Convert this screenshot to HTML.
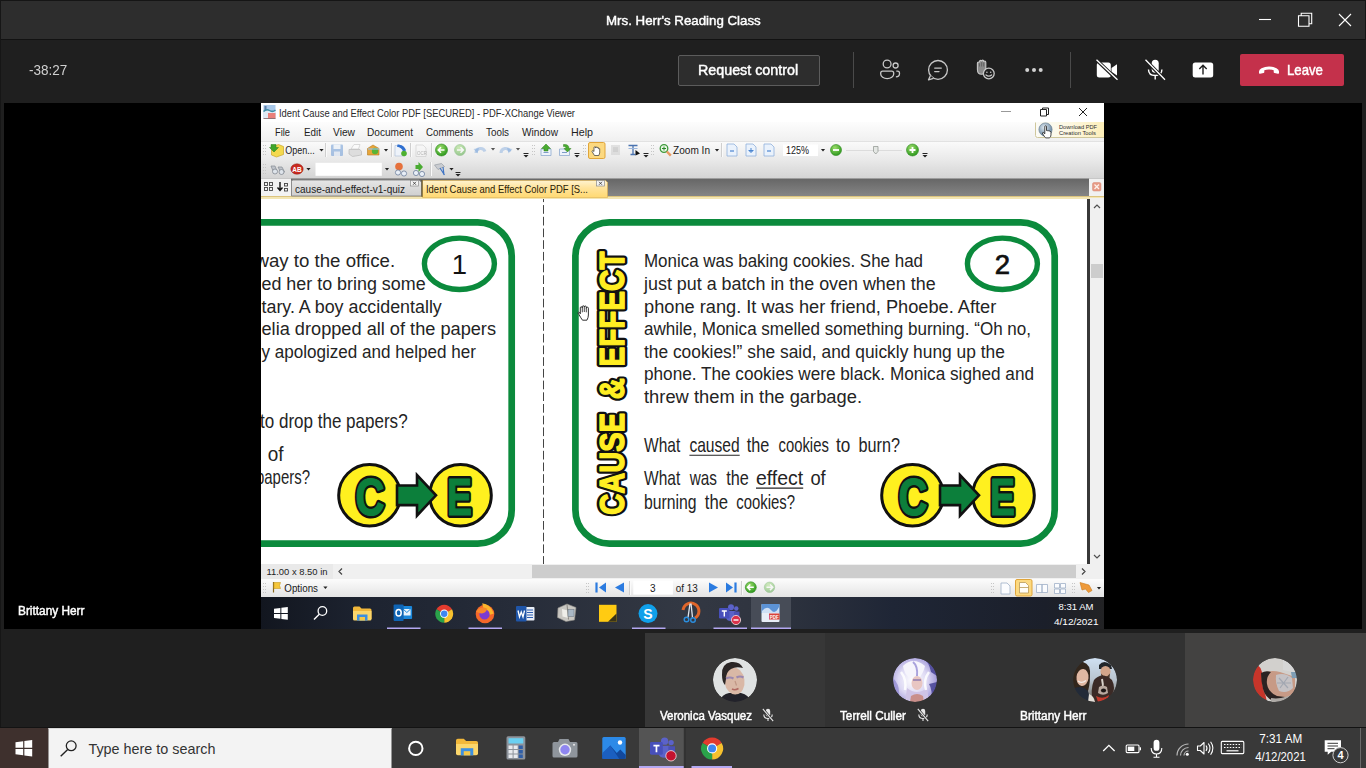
<!DOCTYPE html>
<html lang="en">
<head>
<meta charset="utf-8">
<title>Mrs. Herr's Reading Class</title>
<style>
*{box-sizing:border-box;margin:0;padding:0}
html,body{width:1366px;height:768px;overflow:hidden;background:#1f1f1f;font-family:"Liberation Sans",sans-serif;}
.abs{position:absolute}
.fit{display:inline-block;white-space:nowrap;transform-origin:0 50%;font-weight:normal;-webkit-text-stroke:0.45px currentColor}
#f2{-webkit-text-stroke:0}
#f3{position:absolute;left:19px;top:.5px}
#titlebar{position:absolute;left:0;top:0;width:1366px;height:39px;background:#2d2d2d;}
#titlebar .ttl{position:absolute;left:605.6px;top:11.5px;color:#fff;font-size:13.5px;line-height:18px;font-weight:bold;white-space:nowrap}
#tline{position:absolute;left:0;top:38.500px;width:1366px;height:1.500px;background:#121212}
#toolbar{position:absolute;left:0;top:40px;width:1366px;height:63px;background:#1f1f1f}
#timer{position:absolute;left:29.4px;top:20.7px;color:#d0d0d0;font-size:15px;line-height:18px}
#reqbtn{position:absolute;left:678px;top:14.5px;width:142px;height:31px;border:1px solid #5c5c5c;background:#2d2d2d;color:#fff;font-weight:bold;font-size:14px;line-height:29px;border-radius:2px}
.vsep{position:absolute;width:1px;background:#4a4a4a;top:12px;height:36px}
#leave{position:absolute;left:1240px;top:14px;width:104px;height:32px;background:#c4314b;border-radius:2px;color:#fff;font-weight:bold;font-size:14.5px;line-height:32.5px}
#leave span{position:absolute;left:47px;top:0}
#stage{position:absolute;left:4px;top:103px;width:1358px;height:526px;background:#000}
#presenter{position:absolute;left:18px;top:603px;color:#fff;font-size:12px;font-weight:bold;line-height:16px}
#strip{position:absolute;left:645px;top:633px;width:721px;height:94px}
.tile{position:absolute;top:0;height:94px;background:#323232}
.tile .nm{position:absolute;left:15px;top:75px;color:#fff;font-size:12px;font-weight:bold;line-height:16px;white-space:nowrap}
.av{position:absolute;top:25px;width:44px;height:44px;border-radius:50%;overflow:hidden}
#wtask{position:absolute;left:0;top:728px;width:1366px;height:40px;background:#1c1c1c}
#search{position:absolute;left:49px;top:0;width:342px;height:40px;background:#f2f2f2;color:#2b2b2b;font-size:15px;line-height:40px}
#search span{position:absolute;left:39px;top:0}
#pdf{position:absolute;left:261px;top:103px;width:843px;height:526px;background:#f0f0f0;overflow:hidden}
</style>
</head>
<body>
<div id="titlebar">
  <div class="ttl"><span class="fit" id="f1" style="transform:scaleX(0.985)">Mrs. Herr's Reading Class</span></div>
  <svg class="abs" style="left:1250px;top:0" width="116" height="39" viewBox="0 0 116 39" fill="none" stroke="#fff" stroke-width="1.100">
    <path d="M9 19.500H21"/>
    <path d="M48.500 15.700h10.500v10.500h-10.500zM51.200 15.700v-2.500h10.500v10.500h-2.700"/>
    <path d="M89 14l12 12M101 14l-12 12"/>
  </svg>
</div>
<div id="tline"></div><div class="abs" style="left:0;top:0;width:1366px;height:1px;background:#151515"></div><div class="abs" style="left:1365px;top:0;width:1px;height:103px;background:#161616"></div>
<div id="toolbar">
  <div id="timer"><span class="fit" id="f2" style="transform:scaleX(0.900)">-38:27</span></div>
  <div id="reqbtn"><span class="fit" id="f3" style="transform:scaleX(1.021)">Request control</span></div>
  <div class="vsep" style="left:853px"></div>
  <div class="vsep" style="left:1070px"></div>
  <svg class="abs" style="left:860px;top:5px" width="380" height="50" viewBox="860 45 380 50" fill="none" stroke="#c8c8c8" stroke-width="1.300">
<circle cx="887.100" cy="64" r="3.900"/><circle cx="895.600" cy="65.500" r="2.500"/>
<path d="M882.700 71.200h9q2 0 2 2v.8a6.500 4.600 0 0 1-13 0v-.8q0-2 2-2z"/>
<path d="M896.300 71.200h1.200q2 0 2 2v.3q0 3.200-3.600 3.300"/>
<circle cx="938" cy="69.900" r="9.400"/><path d="M930.500 75.500l-2 4.300 5-1.500" fill="#1f1f1f" stroke-linejoin="round"/>
<path d="M934.700 68.100h6.600M934.700 71.600h4.300" stroke-linecap="round"/>
<path d="M977.400 63.300q0-1.300 1.050-1.300t1.050 1.300v-1.600q0-1.300 1.050-1.300t1.050 1.300v-.3q0-1.300 1.050-1.300t1.050 1.300v.9q0-1.300 1.050-1.300t1.050 1.300v7.200q0 4.800-4.200 4.800t-4.200-4.800z" fill="#8a8a8a" stroke-linejoin="round" stroke-width="1.100"/>
<path d="M979.500 62.500v4M981.600 61.500v5M983.700 62v4.500" stroke="#555" stroke-width=".7"/>
<circle cx="988.800" cy="73.500" r="5.400" fill="#1f1f1f"/><path d="M986 75q2.800 2.200 5.600 0" stroke-linecap="round"/><circle cx="986.900" cy="72.200" r=".8" fill="#c8c8c8" stroke="none"/><circle cx="990.700" cy="72.200" r=".8" fill="#c8c8c8" stroke="none"/>
<g fill="#d0d0d0" stroke="none"><circle cx="1027.200" cy="69.900" r="2"/><circle cx="1034" cy="69.900" r="2"/><circle cx="1040.700" cy="69.900" r="2"/></g>
<g fill="#fff" stroke="none"><rect x="1096.800" y="62.400" width="14" height="15" rx="2.500"/><path d="M1111.500 68l5.500-3.800v11.400l-5.500-3.800z"/>
<rect x="1151.700" y="59.800" width="7" height="13" rx="3.500"/>
<path d="M1192.700 64.900q0-2.500 2.500-2.500h15.500q2.500 0 2.500 2.500v10q0 2.500-2.500 2.500h-15.500q-2.500 0-2.500-2.500z"/></g>
<path d="M1148.500 69.500q0 6 6.700 6t6.700-6M1155.200 75.500v4" stroke="#fff" stroke-width="1.400"/>
<path d="M1096 59.500l21.500 20.500M1145 59.500l20 20.500" stroke="#1f1f1f" stroke-width="3.400"/>
<path d="M1096.500 59.800l21 20M1145.500 59.800l19.500 20" stroke="#fff" stroke-width="1.300"/>
<path d="M1203 74.500v-9M1199.300 69l3.700-3.700 3.700 3.700" stroke="#1f1f1f" stroke-width="1.400"/>
</svg>
  <div id="leave"><svg class="abs" style="left:17px;top:9px" width="24" height="14" viewBox="0 0 24 14"><path d="M2 8.500q0-2 2.500-3.300q3.500-1.700 7.500-1.700t7.500 1.700q2.500 1.300 2.500 3.300v1.500q0 1-1 .8l-3.500-.8q-.8-.2-.8-1v-1.800q-2-.8-4.700-.8t-4.700.8v1.800q0 .8-.8 1l-3.500.8q-1 .2-1-.8z" fill="#fff"/></svg><span class="fit" id="f4" style="transform:scaleX(0.909)">Leave</span></div>
</div>
<div id="stage"></div><div class="abs" style="left:0;top:0;width:1px;height:728px;background:#161616"></div>
<div id="presenter"><span class="fit" id="f5" style="transform:scaleX(0.987)">Brittany Herr</span></div>
<div id="pdf">
<svg id="pdfsvg" class="abs" style="left:0;top:0" width="843" height="526" viewBox="261 103 843 526" font-family="'Liberation Sans',sans-serif">
<defs>
<linearGradient id="gTb" x1="0" y1="0" x2="0" y2="1"><stop offset="0" stop-color="#fbfbfb"/><stop offset="0.5" stop-color="#e9e9e9"/><stop offset="1" stop-color="#d3d3d3"/></linearGradient>
<linearGradient id="gMenu" x1="0" y1="0" x2="0" y2="1"><stop offset="0" stop-color="#fdfdfd"/><stop offset="1" stop-color="#f0f0f0"/></linearGradient>
<linearGradient id="gTabbar" x1="0" y1="0" x2="0" y2="1"><stop offset="0" stop-color="#666"/><stop offset="1" stop-color="#858585"/></linearGradient>
<linearGradient id="gTabA" x1="0" y1="0" x2="0" y2="1"><stop offset="0" stop-color="#fff3cf"/><stop offset="0.45" stop-color="#ffe39a"/><stop offset="1" stop-color="#ffd972"/></linearGradient>
<linearGradient id="gTabI" x1="0" y1="0" x2="0" y2="1"><stop offset="0" stop-color="#e6e6e6"/><stop offset="1" stop-color="#cfcfcf"/></linearGradient>
<linearGradient id="gStat" x1="0" y1="0" x2="0" y2="1"><stop offset="0" stop-color="#fcfcfc"/><stop offset="1" stop-color="#e4e4e4"/></linearGradient>
<linearGradient id="gWt" x1="0" y1="0" x2="1" y2="0"><stop offset="0" stop-color="#12161f"/><stop offset="0.12" stop-color="#1d2330"/><stop offset="0.3" stop-color="#262c39"/><stop offset="0.5" stop-color="#333843"/><stop offset="0.6" stop-color="#2f343f"/><stop offset="0.75" stop-color="#1f2636"/><stop offset="0.93" stop-color="#1b1f2a"/><stop offset="1" stop-color="#222224"/></linearGradient>
<radialGradient id="gGreen" cx="0.4" cy="0.3" r="0.7"><stop offset="0" stop-color="#9bdc6a"/><stop offset="1" stop-color="#2f9a1f"/></radialGradient>
<linearGradient id="gDl" x1="0" y1="0" x2="1" y2="0"><stop offset="0" stop-color="#fbfbf7"/><stop offset="0.5" stop-color="#fdf8e2"/><stop offset="1" stop-color="#fdeeb8"/></linearGradient><radialGradient id="gGlobe" cx="0.4" cy="0.35" r="0.7"><stop offset="0" stop-color="#dfe8ef"/><stop offset="1" stop-color="#5f7f9b"/></radialGradient><clipPath id="docclip"><rect x="261" y="199" width="826" height="365"/></clipPath>
</defs>
<!-- title bar -->
<rect x="261" y="103" width="843" height="19" fill="#ffffff"/>
<g id="picon"><rect x="263.500" y="105" width="12" height="13.500" fill="#a9c9ea"/><rect x="264.500" y="106" width="2" height="4" fill="#5f7fa8"/><path d="M263.500 112q3-3 6-1t6-1v8.500h-12z" fill="#dfeaf5"/><path d="M263.500 111.500q3-3 6-1t6-.500" stroke="#3f8fa5" stroke-width="1.500" fill="none"/><rect x="268" y="113" width="7.500" height="5.500" fill="#e9807a"/><path d="M263.500 118.500h12" stroke="#7d5f62" stroke-width=".8"/></g>
<text x="279" y="116.600" font-size="10.400" fill="#2a2a2a" textLength="296" lengthAdjust="spacingAndGlyphs">Ident Cause and Effect Color PDF [SECURED] - PDF-XChange Viewer</text>
<g stroke="#444" stroke-width="1" fill="none"><path d="M1001 111.500h10" stroke="#999"/><path d="M1040.500 109.500h6v6.500h-6zM1042.500 109.500v-1.500h6v6.500h-2" stroke="#222" stroke-linejoin="round"/><path d="M1079 108l8 8M1087 108l-8 8" stroke="#222"/></g>
<!-- menu bar -->
<rect x="261" y="122" width="843" height="19" fill="url(#gMenu)"/>
<g font-size="10.400" fill="#1e1e1e">
<text x="275" y="135.500" textLength="15" lengthAdjust="spacingAndGlyphs">File</text>
<text x="304" y="135.500" textLength="17" lengthAdjust="spacingAndGlyphs">Edit</text>
<text x="333" y="135.500" textLength="22" lengthAdjust="spacingAndGlyphs">View</text>
<text x="367" y="135.500" textLength="46" lengthAdjust="spacingAndGlyphs">Document</text>
<text x="426" y="135.500" textLength="47" lengthAdjust="spacingAndGlyphs">Comments</text>
<text x="486" y="135.500" textLength="23" lengthAdjust="spacingAndGlyphs">Tools</text>
<text x="522" y="135.500" textLength="36" lengthAdjust="spacingAndGlyphs">Window</text>
<text x="571" y="135.500" textLength="22" lengthAdjust="spacingAndGlyphs">Help</text>
</g>
<!-- download box -->
<rect x="1035" y="122" width="69" height="15.500" fill="url(#gDl)"/>
<path d="M1035.500 122.500v13q0 2 2 2h66.500" fill="none" stroke="#cfc79c" stroke-width="1"/>
<circle cx="1045.500" cy="129.500" r="6.600" fill="url(#gGlobe)" stroke="#6f8294" stroke-width=".7"/>
<path d="M1044.800 126.300q.850-.900 1.700 0v4.200l1.100.200q.700-.500 1.200.300q.800-.300 1.200.400q1-.100 1 .900v2.500q0 2.300-1.700 3.100h-3.500q-1.200-.600-2.500-3.100l-1-1.800q.600-.900 1.600-.200l.900 1z" fill="#fff" stroke="#1a1a1a" stroke-width=".8" stroke-linejoin="round"/>
<g font-size="6.200" fill="#2e2e2e"><text x="1059" y="128.900" textLength="38" lengthAdjust="spacingAndGlyphs">Download PDF</text><text x="1059" y="135" textLength="37" lengthAdjust="spacingAndGlyphs">Creation Tools</text></g>
<!-- toolbars -->
<rect x="261" y="141" width="843" height="38" fill="url(#gTb)"/>
<rect x="261" y="141" width="843" height="1" fill="#e2e2e2"/>
<!--TB-START--><rect x="263" y="145" width="1" height="1" fill="#c6c6c6"/><rect x="265" y="145" width="1" height="1" fill="#c6c6c6"/><rect x="263" y="148" width="1" height="1" fill="#c6c6c6"/><rect x="265" y="148" width="1" height="1" fill="#c6c6c6"/><rect x="263" y="151" width="1" height="1" fill="#c6c6c6"/><rect x="265" y="151" width="1" height="1" fill="#c6c6c6"/><rect x="263" y="154" width="1" height="1" fill="#c6c6c6"/><rect x="265" y="154" width="1" height="1" fill="#c6c6c6"/><rect x="263" y="164" width="1" height="1" fill="#c6c6c6"/><rect x="265" y="164" width="1" height="1" fill="#c6c6c6"/><rect x="263" y="167" width="1" height="1" fill="#c6c6c6"/><rect x="265" y="167" width="1" height="1" fill="#c6c6c6"/><rect x="263" y="170" width="1" height="1" fill="#c6c6c6"/><rect x="265" y="170" width="1" height="1" fill="#c6c6c6"/><rect x="263" y="173" width="1" height="1" fill="#c6c6c6"/><rect x="265" y="173" width="1" height="1" fill="#c6c6c6"/><path d="M271.500 147l7-2.500 5 2v8l-7 2.500-5-2z" fill="#f4d94e" stroke="#c9a62a" stroke-width=".7"/><path d="M271 144.500h5v3h2.500l-4.500 4.500-4.500-4.500h1.500z" fill="#3ea52a" stroke="#2a7d1b" stroke-width=".5"/><text x="285.200" y="154" font-size="10.500" fill="#1a1a1a" textLength="29.500" lengthAdjust="spacingAndGlyphs">Open...</text><path d="M319.4 149h4.200l-2.100 2.400z" fill="#222"/><rect x="325" y="143" width="1" height="14" fill="#cfcfcf"/><rect x="326" y="143" width="1" height="14" fill="#fafafa"/><g opacity=".55"><rect x="331" y="144.500" width="12" height="11.500" rx="1" fill="#6d9bd6"/><rect x="333.500" y="144.500" width="7" height="4.500" fill="#e8f0fa"/><rect x="334" y="151.500" width="6" height="4.500" fill="#d6e2f3"/></g><g opacity=".8"><path d="M351 149l3-4.500h6l-1.500 4.500z" fill="#fdfdfd" stroke="#b9b9b9" stroke-width=".6"/><path d="M349 149.500h11l1.500 2v3.500l-9 1.500-3.500-2.500z" fill="#d9d9d9" stroke="#a5a5a5" stroke-width=".6"/></g><path d="M367.500 148.500l5.500-3.500 6 3.500v6.500h-11.500z" fill="#e7a53a" stroke="#b67a1c" stroke-width=".6"/><circle cx="375" cy="151" r="3.200" fill="#58b436"/><path d="M368 149h11" stroke="#9cc0e4" stroke-width="1.200"/><path d="M383.9 149h4.200l-2.100 2.400z" fill="#222"/><rect x="391" y="143" width="1" height="14" fill="#cfcfcf"/><rect x="392" y="143" width="1" height="14" fill="#fafafa"/><path d="M395 145.500h6l4 4v6.500h-10z" fill="#eef3fa" stroke="#a9bcd6" stroke-width=".6"/><path d="M397.500 144.500c4 0 7.500 2 8.500 6l-3 1c-1-3-3-4.500-6-4.800z" fill="#2f6fd0"/><circle cx="404" cy="153.500" r="2.800" fill="#4db030"/><rect x="410" y="143" width="1" height="14" fill="#cfcfcf"/><rect x="411" y="143" width="1" height="14" fill="#fafafa"/><g opacity=".5"><path d="M416 145h7l3 3v8.500h-10z" fill="#f7f7f7" stroke="#b0b0b0" stroke-width=".7"/><text x="417" y="154.500" font-size="4.500" fill="#777">OCR</text></g><rect x="431" y="143" width="1" height="14" fill="#cfcfcf"/><rect x="432" y="143" width="1" height="14" fill="#fafafa"/><g opacity="1"><circle cx="441.5" cy="150" r="6" fill="url(#gGreen)" stroke="#2c8a1c" stroke-width=".6"/><path d="M444.5 150h-5.500M441.0 147.2l-2.800 2.800 2.800 2.800" stroke="#fff" stroke-width="1.500" fill="none"/></g><g opacity="0.45"><circle cx="460" cy="150" r="5.5" fill="url(#gGreen)" stroke="#2c8a1c" stroke-width=".6"/><path d="M457 150h5.500M460.5 147.2l2.800 2.800-2.800 2.800" stroke="#fff" stroke-width="1.500" fill="none"/></g><g opacity=".38" fill="none" stroke="#6a9bd8" stroke-width="3"><path d="M476 153c0-5 7-6.500 9-1.500"/><path d="M501 153c0-5 7-6.500 9-1.500"/></g><g opacity=".38" fill="#6a9bd8"><path d="M473.500 149l5.500-1-1.500 5.500z"/><path d="M512.500 149l-5.500-1 1.500 5.500z"/></g><path d="M490.9 148h4.200l-2.100 2.400z" fill="#555"/><path d="M515.9 148h4.200l-2.100 2.400z" fill="#555"/><path d="M523.5 153.5h5" stroke="#222" stroke-width="1"/><path d="M523.5 155h5l-2.500 2.500z" fill="#222"/><rect x="532" y="145" width="1" height="1" fill="#c6c6c6"/><rect x="534" y="145" width="1" height="1" fill="#c6c6c6"/><rect x="532" y="148" width="1" height="1" fill="#c6c6c6"/><rect x="534" y="148" width="1" height="1" fill="#c6c6c6"/><rect x="532" y="151" width="1" height="1" fill="#c6c6c6"/><rect x="534" y="151" width="1" height="1" fill="#c6c6c6"/><rect x="532" y="154" width="1" height="1" fill="#c6c6c6"/><rect x="534" y="154" width="1" height="1" fill="#c6c6c6"/><path d="M541 149h10v6.500h-10z" fill="#eef3fb" stroke="#8ea9cf" stroke-width=".8"/><path d="M543.5 152.5h5" stroke="#7e9cc8" stroke-width="1"/><path d="M541.5 148.5l4.500-4.500 4.500 4.500h-2.500v2.500h-4v-2.500z" fill="#49ab31" stroke="#2e7f1c" stroke-width=".5"/><path d="M559.5 149h10v6.500h-10z" fill="#eef3fb" stroke="#8ea9cf" stroke-width=".8"/><path d="M562.0 152.5h5" stroke="#7e9cc8" stroke-width="1"/><path d="M563.5 144.5c3.500-.5 5.500 1 5.500 4h2l-3.500 3.500-3.500-3.500h2c0-1.500-1-2-2.500-2z" fill="#49ab31" stroke="#2e7f1c" stroke-width=".5"/><path d="M574.5 153.5h5" stroke="#222" stroke-width="1"/><path d="M574.5 155h5l-2.500 2.500z" fill="#222"/><rect x="583" y="145" width="1" height="1" fill="#c6c6c6"/><rect x="585" y="145" width="1" height="1" fill="#c6c6c6"/><rect x="583" y="148" width="1" height="1" fill="#c6c6c6"/><rect x="585" y="148" width="1" height="1" fill="#c6c6c6"/><rect x="583" y="151" width="1" height="1" fill="#c6c6c6"/><rect x="585" y="151" width="1" height="1" fill="#c6c6c6"/><rect x="583" y="154" width="1" height="1" fill="#c6c6c6"/><rect x="585" y="154" width="1" height="1" fill="#c6c6c6"/><rect x="588.500" y="142.500" width="16.500" height="16" rx="1.500" fill="#fcd980" stroke="#e0a53a"/><path d="M594 147.500v4l-1.200-1-.900.800 2.600 4.200h4.300l.900-2.500v-4.300h-1.200v-1h-1.200v-.600h-1.200v.500h-1.100v-1.100z" fill="#fff" stroke="#333" stroke-width=".7"/><g opacity=".45"><rect x="611" y="145" width="9" height="10" fill="#c8c8c8"/><rect x="613" y="147" width="5" height="5" fill="#aaa"/></g><path d="M628.500 145.500h9M633 145.500v9M630.500 154.500h5" stroke="#4a73b0" stroke-width="1.300" fill="none"/><path d="M628.500 148.500h9" stroke="#9db7dd" stroke-width="1"/><path d="M635.500 150l4.500 3.500-4.500 2z" fill="#111"/><path d="M643.5 153.5h5" stroke="#222" stroke-width="1"/><path d="M643.5 155h5l-2.500 2.500z" fill="#222"/><rect x="651" y="145" width="1" height="1" fill="#c6c6c6"/><rect x="653" y="145" width="1" height="1" fill="#c6c6c6"/><rect x="651" y="148" width="1" height="1" fill="#c6c6c6"/><rect x="653" y="148" width="1" height="1" fill="#c6c6c6"/><rect x="651" y="151" width="1" height="1" fill="#c6c6c6"/><rect x="653" y="151" width="1" height="1" fill="#c6c6c6"/><rect x="651" y="154" width="1" height="1" fill="#c6c6c6"/><rect x="653" y="154" width="1" height="1" fill="#c6c6c6"/><circle cx="664" cy="148.500" r="3.800" fill="#e9f7e6" stroke="#3d9a3a" stroke-width="1.300"/><path d="M662 148.500h4M664 146.500v4" stroke="#2d8a2a" stroke-width="1"/><path d="M666.800 151.500l4 4.200" stroke="#e89a62" stroke-width="2.400"/><text x="673" y="153.800" font-size="10.500" fill="#1a1a1a" textLength="37" lengthAdjust="spacingAndGlyphs">Zoom In</text><path d="M714.9 149h4.200l-2.100 2.400z" fill="#222"/><rect x="721" y="143" width="1" height="14" fill="#cfcfcf"/><rect x="722" y="143" width="1" height="14" fill="#fafafa"/><g opacity="1"><path d="M727 144h7l3 3v9h-10z" fill="#eaf2fc" stroke="#8fb0dc" stroke-width=".8"/><path d="M730 151h4" stroke="#4d86d0" stroke-width="1.200"/></g><g opacity="1"><path d="M746 144h7l3 3v9h-10z" fill="#eaf2fc" stroke="#8fb0dc" stroke-width=".8"/><path d="M749 151h4" stroke="#4d86d0" stroke-width="1.200"/></g><g opacity="1"><path d="M764 144h7l3 3v9h-10z" fill="#eaf2fc" stroke="#8fb0dc" stroke-width=".8"/><path d="M767 151h4" stroke="#4d86d0" stroke-width="1.200"/></g><path d="M748.500 150.500h5M751 148v5" stroke="#4d86d0" stroke-width="1"/><rect x="783" y="144.500" width="35" height="11.500" fill="#fff"/><text x="786" y="153.800" font-size="10" fill="#1a1a1a" textLength="23" lengthAdjust="spacingAndGlyphs">125%</text><path d="M820.9 149h4.200l-2.100 2.400z" fill="#222"/><g opacity="1"><circle cx="836" cy="150" r="5.5" fill="url(#gGreen)" stroke="#2c8a1c" stroke-width=".6"/><path d="M833 150h6" stroke="#fff" stroke-width="1.800"/></g><path d="M846 150.500h56" stroke="#dcdcdc" stroke-width="1"/><path d="M873.500 146.500h4.500v5l-2.250 2.500-2.250-2.500z" fill="#e4e7e4" stroke="#8b918b" stroke-width=".7"/><g opacity="1"><circle cx="912.5" cy="150" r="6" fill="url(#gGreen)" stroke="#2c8a1c" stroke-width=".6"/><path d="M909.5 150h6M912.5 147v6" stroke="#fff" stroke-width="1.800"/></g><path d="M922.5 153.5h5" stroke="#222" stroke-width="1"/><path d="M922.5 155h5l-2.500 2.500z" fill="#222"/><g opacity=".8"><path d="M271 166l4 0 2 5h-4z M278 167l4 0 2.500 5h-4z" fill="#b9bec6" stroke="#6d7580" stroke-width=".7"/><circle cx="275" cy="171.500" r="2.500" fill="#dfe6ee" stroke="#6d7580" stroke-width=".8"/><circle cx="281.500" cy="172" r="2.500" fill="#dfe6ee" stroke="#6d7580" stroke-width=".8"/></g><ellipse cx="297" cy="169" rx="6.200" ry="5.200" fill="#c92a20" stroke="#8e1a12" stroke-width=".5"/><text x="297" y="171.500" font-size="6.500" font-weight="bold" fill="#fff" text-anchor="middle">AB</text><path d="M306.4 168h4.200l-2.100 2.400z" fill="#222"/><rect x="315.500" y="162.800" width="66.300" height="13" fill="#fff"/><path d="M384.9 168h4.200l-2.100 2.400z" fill="#222"/><circle cx="399" cy="166.500" r="3.800" fill="#e6713c"/><circle cx="398" cy="172.500" r="2.600" fill="#e8eef6" stroke="#6d7f9c" stroke-width=".8"/><circle cx="404" cy="173.500" r="2.600" fill="#e8eef6" stroke="#6d7f9c" stroke-width=".8"/><path d="M419 163l5 4.500h-3v3h-4v-3h-3z" fill="#49ab31" transform="rotate(90 419 167)"/><circle cx="416" cy="173" r="2.600" fill="#e8eef6" stroke="#6d7f9c" stroke-width=".8"/><circle cx="422" cy="174" r="2.600" fill="#e8eef6" stroke="#6d7f9c" stroke-width=".8"/><rect x="430" y="162" width="1" height="14" fill="#cfcfcf"/><rect x="431" y="162" width="1" height="14" fill="#fafafa"/><path d="M434.500 165l7-1.500 3 3-6.500 3z" fill="#c9ccd1" stroke="#8d939c" stroke-width=".6"/><path d="M440 168l4.500 7M443 167l1 8" stroke="#3f74c4" stroke-width="1.200"/><path d="M449.4 168h4.200l-2.100 2.400z" fill="#222"/><path d="M455.5 172.5h5" stroke="#222" stroke-width="1"/><path d="M455.5 174h5l-2.500 2.500z" fill="#222"/><!--TB-END-->
<!-- tab bar -->
<rect x="261" y="178.500" width="843" height="17.500" fill="url(#gTabbar)"/>
<rect x="261" y="178.500" width="30" height="17.500" fill="#f3f3f3"/>
<rect x="261" y="196" width="843" height="3" fill="#f3e6b4"/>
<rect x="261" y="196" width="843" height="1" fill="#dcc47e"/>
<path d="M291.500 196v-14.500q0-1.500 1.500-1.500h126l2.500 2v14z" fill="url(#gTabI)" stroke="#8c8c8c"/>
<path d="M422.500 197.500v-17h183l2 2v15z" fill="url(#gTabA)" stroke="#e0b24f" stroke-width=".6"/>
<path d="M422 180v17" stroke="#5a4a20" stroke-width="1"/>
<text x="295" y="192.500" font-size="10.300" fill="#222" textLength="110" lengthAdjust="spacingAndGlyphs">cause-and-effect-v1-quiz</text>
<text x="426" y="192.500" font-size="10.300" fill="#2a2208" textLength="162" lengthAdjust="spacingAndGlyphs">Ident Cause and Effect Color PDF [S...</text>
<g fill="#f4f4f4" stroke="#8a8a8a" stroke-width=".7"><rect x="410.500" y="180.500" width="8" height="5.500"/><rect x="596.500" y="180.500" width="8" height="5.500"/></g>
<g stroke="#333" stroke-width=".8"><path d="M413 181.800l3 3M416 181.800l-3 3M599 181.800l3 3M602 181.800l-3 3"/></g>
<g fill="none" stroke="#444" stroke-width=".9"><rect x="264.500" y="182.500" width="3" height="3"/><rect x="269.500" y="182.500" width="3" height="3"/><rect x="264.500" y="187.500" width="3" height="3"/><rect x="269.500" y="187.500" width="3" height="3"/><rect x="284.500" y="183.500" width="3" height="2.500"/><rect x="284.500" y="188.500" width="3" height="2.500"/></g>
<path d="M280 182v8M277.500 187.500l2.500 3 2.500-3" stroke="#111" stroke-width="1.400" fill="none"/>
<rect x="1089" y="178.500" width="15" height="17.500" fill="#f1f1f1"/>
<rect x="1092.500" y="182.500" width="8.500" height="8.500" rx="1.500" fill="#e69a86" stroke="#d98a74" stroke-width=".5"/>
<path d="M1094.500 184.500l4.500 4.500M1099 184.500l-4.500 4.500" stroke="#fdf1ec" stroke-width="1.300"/>
<!-- doc area -->
<rect x="261" y="199" width="828" height="365" fill="#ffffff"/>
<g clip-path="url(#docclip)">
<!--DOC-START--><rect x="32.39999999999998" y="222.400" width="479.300" height="321.300" rx="34" ry="34" fill="#fff" stroke="#0b8a3c" stroke-width="6.700"/><rect x="575.4" y="222.400" width="479.300" height="321.300" rx="34" ry="34" fill="#fff" stroke="#0b8a3c" stroke-width="6.700"/><path d="M543.5 199v365" stroke="#444" stroke-width="1" stroke-dasharray="8.700 3" stroke-dashoffset="5.600"/><ellipse cx="459.4" cy="263.8" rx="35" ry="25.7" fill="#fff" stroke="#0b8a3c" stroke-width="5.4"/><text x="459.4" y="274.3" font-size="27.5" fill="#111" text-anchor="middle">1</text><ellipse cx="1002.4" cy="263.8" rx="35" ry="25.7" fill="#fff" stroke="#0b8a3c" stroke-width="5.4"/><text x="1002.4" y="274.3" font-size="27.5" fill="#111" text-anchor="middle" stroke="#111" stroke-width=".7">2</text><g transform="translate(-543,0)"><circle cx="912.5" cy="495.3" r="30.8" fill="#fff01f" stroke="#111" stroke-width="3"/><circle cx="1003.5" cy="495.3" r="30.8" fill="#fff01f" stroke="#111" stroke-width="3"/><path d="M940 485.500h20v-10.500l19 20.300-19 20.300v-10.500h-20z" fill="#0c7f3b" stroke="#111" stroke-width="2.600" stroke-linejoin="miter"/><g font-weight="bold" font-size="52" text-anchor="middle" stroke-linejoin="round"><text x="913" y="515" fill="#111" stroke="#111" stroke-width="6" style="vector-effect:non-scaling-stroke" textLength="29" lengthAdjust="spacingAndGlyphs">C</text><text x="1002.5" y="515" fill="#111" stroke="#111" stroke-width="6" style="vector-effect:non-scaling-stroke" textLength="25" lengthAdjust="spacingAndGlyphs">E</text><text x="913" y="515" fill="#0c7f3b" stroke="#0c7f3b" stroke-width="1.2" style="vector-effect:non-scaling-stroke" textLength="29" lengthAdjust="spacingAndGlyphs">C</text><text x="1002.5" y="515" fill="#0c7f3b" stroke="#0c7f3b" stroke-width="1.2" style="vector-effect:non-scaling-stroke" textLength="25" lengthAdjust="spacingAndGlyphs">E</text></g></g><g transform="translate(0,0)"><circle cx="912.5" cy="495.3" r="30.8" fill="#fff01f" stroke="#111" stroke-width="3"/><circle cx="1003.5" cy="495.3" r="30.8" fill="#fff01f" stroke="#111" stroke-width="3"/><path d="M940 485.500h20v-10.500l19 20.300-19 20.300v-10.500h-20z" fill="#0c7f3b" stroke="#111" stroke-width="2.600" stroke-linejoin="miter"/><g font-weight="bold" font-size="52" text-anchor="middle" stroke-linejoin="round"><text x="913" y="515" fill="#111" stroke="#111" stroke-width="6" style="vector-effect:non-scaling-stroke" textLength="29" lengthAdjust="spacingAndGlyphs">C</text><text x="1002.5" y="515" fill="#111" stroke="#111" stroke-width="6" style="vector-effect:non-scaling-stroke" textLength="25" lengthAdjust="spacingAndGlyphs">E</text><text x="913" y="515" fill="#0c7f3b" stroke="#0c7f3b" stroke-width="1.2" style="vector-effect:non-scaling-stroke" textLength="29" lengthAdjust="spacingAndGlyphs">C</text><text x="1002.5" y="515" fill="#0c7f3b" stroke="#0c7f3b" stroke-width="1.2" style="vector-effect:non-scaling-stroke" textLength="25" lengthAdjust="spacingAndGlyphs">E</text></g></g><g transform="translate(623.7,516) rotate(-90)" font-size="35" font-weight="bold" stroke-linejoin="round"><text x="1.2" y="0" fill="#111" stroke="#111" stroke-width="6.6" style="vector-effect:non-scaling-stroke" textLength="102" lengthAdjust="spacingAndGlyphs">CAUSE</text><text x="116.8" y="0" fill="#111" stroke="#111" stroke-width="6.6" style="vector-effect:non-scaling-stroke" textLength="21" lengthAdjust="spacingAndGlyphs">&amp;</text><text x="149.5" y="0" fill="#111" stroke="#111" stroke-width="6.6" style="vector-effect:non-scaling-stroke" textLength="115" lengthAdjust="spacingAndGlyphs">EFFECT</text><text x="1.2" y="0" fill="#ffee22" stroke="#ffee22" stroke-width="1.4" style="vector-effect:non-scaling-stroke" textLength="102" lengthAdjust="spacingAndGlyphs">CAUSE</text><text x="116.8" y="0" fill="#ffee22" stroke="#ffee22" stroke-width="1.4" style="vector-effect:non-scaling-stroke" textLength="21" lengthAdjust="spacingAndGlyphs">&amp;</text><text x="149.5" y="0" fill="#ffee22" stroke="#ffee22" stroke-width="1.4" style="vector-effect:non-scaling-stroke" textLength="115" lengthAdjust="spacingAndGlyphs">EFFECT</text></g><g fill="#242424"><text x="644" y="267.3" font-size="17.5" textLength="279" lengthAdjust="spacingAndGlyphs">Monica was baking cookies. She had</text><text x="644" y="289.9" font-size="17.5" textLength="291.6" lengthAdjust="spacingAndGlyphs">just put a batch in the oven when the</text><text x="644" y="312.5" font-size="17.5" textLength="352.3" lengthAdjust="spacingAndGlyphs">phone rang. It was her friend, Phoebe. After</text><text x="644" y="335.1" font-size="17.5" textLength="387" lengthAdjust="spacingAndGlyphs">awhile, Monica smelled something burning. “Oh no,</text><text x="644" y="357.7" font-size="17.5" textLength="360.8" lengthAdjust="spacingAndGlyphs">the cookies!” she said, and quickly hung up the</text><text x="644" y="380.3" font-size="17.5" textLength="390" lengthAdjust="spacingAndGlyphs">phone. The cookies were black. Monica sighed and</text><text x="644" y="402.9" font-size="17.5" textLength="218" lengthAdjust="spacingAndGlyphs">threw them in the garbage.</text><text y="452.2" font-size="21"><tspan x="644" textLength="36.2" lengthAdjust="spacingAndGlyphs">What</tspan> <tspan x="689.4" textLength="50.3" lengthAdjust="spacingAndGlyphs">caused</tspan> <tspan x="746.8" textLength="22.6" lengthAdjust="spacingAndGlyphs">the</tspan> <tspan x="778.6" textLength="50.2" lengthAdjust="spacingAndGlyphs">cookies</tspan> <tspan x="836" textLength="14.3" lengthAdjust="spacingAndGlyphs">to</tspan> <tspan x="858.5" textLength="41.5" lengthAdjust="spacingAndGlyphs">burn?</tspan></text><text y="485.2" font-size="21"><tspan x="644" textLength="36.2" lengthAdjust="spacingAndGlyphs">What</tspan> <tspan x="689.8" textLength="27.2" lengthAdjust="spacingAndGlyphs">was</tspan> <tspan x="726.3" textLength="22.6" lengthAdjust="spacingAndGlyphs">the</tspan> <tspan x="756" textLength="47.2" lengthAdjust="spacingAndGlyphs">effect</tspan> <tspan x="810.4" textLength="15.3" lengthAdjust="spacingAndGlyphs">of</tspan></text><text y="509.2" font-size="21"><tspan x="644" textLength="52.6" lengthAdjust="spacingAndGlyphs">burning</tspan> <tspan x="704.8" textLength="23.2" lengthAdjust="spacingAndGlyphs">the</tspan> <tspan x="736.2" textLength="58.8" lengthAdjust="spacingAndGlyphs">cookies?</tspan></text><path d="M689.4 455.300H739.700M756 488.100H803.200" stroke="#242424" stroke-width="1.100"/><text x="255.5" y="267.3" font-size="17.5" textLength="139.6" lengthAdjust="spacingAndGlyphs">way to the office.</text><text x="261.5" y="289.9" font-size="17.5" textLength="164.1" lengthAdjust="spacingAndGlyphs">ed her to bring some</text><text x="261.5" y="312.5" font-size="17.5" textLength="180.3" lengthAdjust="spacingAndGlyphs">tary. A boy accidentally</text><text x="261.5" y="335.1" font-size="17.5" textLength="234.5" lengthAdjust="spacingAndGlyphs">elia dropped all of the papers</text><text x="261.5" y="357.7" font-size="17.5" textLength="214.5" lengthAdjust="spacingAndGlyphs">y apologized and helped her</text><text x="260" y="427.7" font-size="21" textLength="147.6" lengthAdjust="spacingAndGlyphs">to drop the papers?</text><text x="267.8" y="461" font-size="21" textLength="15.8" lengthAdjust="spacingAndGlyphs">of</text><text x="256" y="484.4" font-size="21" textLength="54" lengthAdjust="spacingAndGlyphs">papers?</text></g><path d="M580.300 313.800V307.800q0-1 1-1t1 1V306.800q0-1 1-1t1 1V307q0-1 1-1t1 1V308.200q0-1 1.050-1t1.050 1V315q0 2.500-1.500 5.200H582.500q-1.500-2-3.600-5.800l-1-1.600q.700-1.100 1.700-.300z" fill="#fff" stroke="#1c1c1c" stroke-width=".9" stroke-linejoin="round"/><path d="M582.300 307.500v4.800M584.300 307v5M586.300 308v4.300" stroke="#1c1c1c" stroke-width=".8"/><!--DOC-END-->
</g>
<!-- vscroll -->
<rect x="1087" y="199" width="3" height="365" fill="#383838"/>
<rect x="1090" y="198" width="14" height="366" fill="#f0f0f0"/>
<rect x="1091" y="264" width="12" height="14" fill="#cdcdcd"/>
<path d="M1094 208l3-3 3 3M1094 555l3 3 3-3" stroke="#505050" stroke-width="1.200" fill="none"/>
<!-- status rows -->
<rect x="261" y="564" width="843" height="15" fill="#f0f0f0"/>
<rect x="261" y="564" width="72" height="15" fill="#e9e9e9"/>
<rect x="532" y="565" width="544" height="13" fill="#cdcdcd"/>
<path d="M342 568.500l-3 3 3 3M1082 568.500l3 3-3 3" stroke="#444" stroke-width="1.200" fill="none"/>
<text x="266.500" y="575" font-size="9" fill="#222" textLength="61" lengthAdjust="spacingAndGlyphs">11.00 x 8.50 in</text>
<rect x="261" y="579" width="843" height="18" fill="url(#gStat)"/>
<!--ST-START--><rect x="263" y="583" width="1" height="1" fill="#c6c6c6"/><rect x="265" y="583" width="1" height="1" fill="#c6c6c6"/><rect x="263" y="586" width="1" height="1" fill="#c6c6c6"/><rect x="265" y="586" width="1" height="1" fill="#c6c6c6"/><rect x="263" y="589" width="1" height="1" fill="#c6c6c6"/><rect x="265" y="589" width="1" height="1" fill="#c6c6c6"/><rect x="263" y="592" width="1" height="1" fill="#c6c6c6"/><rect x="265" y="592" width="1" height="1" fill="#c6c6c6"/><path d="M273.500 582v10.500" stroke="#8a6a1c" stroke-width="1.200"/><path d="M274 582.500h6.500l-1 3 1 3h-6.500z" fill="#f5c63a" stroke="#c99a1f" stroke-width=".6"/><text x="284.300" y="591.700" font-size="10.200" fill="#1a1a1a" textLength="33.700" lengthAdjust="spacingAndGlyphs">Options</text><path d="M323.29999999999995 586.5h4.200l-2.100 2.400z" fill="#222"/><rect x="586" y="583" width="1" height="1" fill="#c6c6c6"/><rect x="588" y="583" width="1" height="1" fill="#c6c6c6"/><rect x="586" y="586" width="1" height="1" fill="#c6c6c6"/><rect x="588" y="586" width="1" height="1" fill="#c6c6c6"/><rect x="586" y="589" width="1" height="1" fill="#c6c6c6"/><rect x="588" y="589" width="1" height="1" fill="#c6c6c6"/><rect x="586" y="592" width="1" height="1" fill="#c6c6c6"/><rect x="588" y="592" width="1" height="1" fill="#c6c6c6"/><path d="M596.500 582.500v10" stroke="#2b7be0" stroke-width="2.200"/><path d="M606 582.500v10l-7-5z" fill="#2b7be0"/><path d="M624 582.500v10l-9-5z" fill="#2b7be0"/><rect x="629" y="581" width="1" height="14" fill="#cfcfcf"/><rect x="630" y="581" width="1" height="14" fill="#fafafa"/><rect x="633.300" y="580.600" width="39.600" height="14" fill="#fff"/><text x="652.700" y="591.600" font-size="10" fill="#1a1a1a" text-anchor="middle">3</text><text x="675.700" y="591.600" font-size="10" fill="#1a1a1a" textLength="22" lengthAdjust="spacingAndGlyphs">of 13</text><path d="M709 582.500v10l9-5z" fill="#2b7be0"/><path d="M735.500 582.500v10" stroke="#2b7be0" stroke-width="2.200"/><path d="M726 582.500v10l7-5z" fill="#2b7be0"/><rect x="741" y="581" width="1" height="14" fill="#cfcfcf"/><rect x="742" y="581" width="1" height="14" fill="#fafafa"/><g opacity="1"><circle cx="750.8" cy="587.3" r="5.5" fill="url(#gGreen)" stroke="#2c8a1c" stroke-width=".6"/><path d="M753.8 587.3h-5.500M750.3 584.5l-2.800 2.800 2.800 2.800" stroke="#fff" stroke-width="1.500" fill="none"/></g><g opacity="0.4"><circle cx="769.5" cy="587.3" r="5.2" fill="url(#gGreen)" stroke="#2c8a1c" stroke-width=".6"/><path d="M766.5 587.3h5.500M770.0 584.5l2.800 2.800-2.800 2.800" stroke="#fff" stroke-width="1.500" fill="none"/></g><rect x="991" y="583" width="1" height="1" fill="#c6c6c6"/><rect x="993" y="583" width="1" height="1" fill="#c6c6c6"/><rect x="991" y="586" width="1" height="1" fill="#c6c6c6"/><rect x="993" y="586" width="1" height="1" fill="#c6c6c6"/><rect x="991" y="589" width="1" height="1" fill="#c6c6c6"/><rect x="993" y="589" width="1" height="1" fill="#c6c6c6"/><rect x="991" y="592" width="1" height="1" fill="#c6c6c6"/><rect x="993" y="592" width="1" height="1" fill="#c6c6c6"/><path d="M1001 583h6l3 3v8h-9z" fill="#fbfcfe" stroke="#9fb0c8" stroke-width=".8"/><rect x="1015.500" y="579.500" width="16.500" height="16.500" rx="1.500" fill="#fcd980" stroke="#e0a53a"/><path d="M1019.500 582.500h6l3 3v7.500h-9z" fill="#fffdf6" stroke="#b99a58" stroke-width=".8"/><path d="M1019.500 587.500h9" stroke="#b99a58" stroke-width=".8"/><path d="M1036.500 584.500h5.500v8h-5.500zM1042 584.500h5.500v8h-5.500z" fill="#fbfcfe" stroke="#9fb0c8" stroke-width=".8"/><path d="M1054.500 583.500h5v4.500h-5zM1060.500 583.500h5v4.500h-5zM1054.500 589h5v4.500h-5zM1060.500 589h5v4.500h-5z" fill="#fbfcfe" stroke="#9fb0c8" stroke-width=".8"/><rect x="1072" y="583" width="1" height="1" fill="#c6c6c6"/><rect x="1074" y="583" width="1" height="1" fill="#c6c6c6"/><rect x="1072" y="586" width="1" height="1" fill="#c6c6c6"/><rect x="1074" y="586" width="1" height="1" fill="#c6c6c6"/><rect x="1072" y="589" width="1" height="1" fill="#c6c6c6"/><rect x="1074" y="589" width="1" height="1" fill="#c6c6c6"/><rect x="1072" y="592" width="1" height="1" fill="#c6c6c6"/><rect x="1074" y="592" width="1" height="1" fill="#c6c6c6"/><path d="M1080 582.500l9 2.500 3 5.500-3.500 2-3-3.500-3.500 1z" fill="#ee9a3a" stroke="#c97818" stroke-width=".6"/><path d="M1096.9 587h4.200l-2.100 2.400z" fill="#222"/><!--ST-END-->
<!-- inner windows taskbar -->
<rect x="261" y="597" width="843" height="32" fill="url(#gWt)"/>
<!--IT-START--><rect x="751" y="597" width="40" height="32" fill="#474c57"/><path d="M274 608.792L280.348 607.96V612.9H274zM281.348 607.768L287.8 607V612.9H281.348zM274 613.9H280.348V618.84L274 618.008zM281.348 613.9H287.8V619.8L281.348 619.032z" fill="#fff"/><circle cx="322.400" cy="611" r="4.300" fill="none" stroke="#fff" stroke-width="1.300"/><path d="M319.300 614.200l-5.300 5.300" stroke="#fff" stroke-width="1.400"/><g transform="translate(353,605.5) scale(1)"><path d="M0 2.500q0-1.500 1.500-1.500h5l2 2h8.500q1.500 0 1.500 1.500v9h-18.500z" fill="#f2b83a"/><path d="M0 5.500h18.500v8q0 1.500-1.500 1.500h-15.500q-1.500 0-1.500-1.500z" fill="#fbd66b"/><path d="M4 9h10.500v6h-10.500z" fill="#3c8fe0"/><path d="M6.500 11.500h5.500v3.500h-5.500z" fill="#f5c84a"/></g><g transform="translate(393.6,604.5) scale(1)"><rect x="7" y="1.500" width="11.500" height="13" rx="1" fill="#1a86d9"/><path d="M9.500 4.500h7.500v6.500h-7.500z" fill="#e8f3fc"/><path d="M9.500 4.500l3.750 3.500 3.750-3.500" stroke="#1a86d9" stroke-width="1" fill="none"/><rect x="0" y="0" width="10" height="16.500" rx="1" fill="#0f64b4"/><ellipse cx="5" cy="8.200" rx="2.600" ry="3.300" fill="none" stroke="#fff" stroke-width="1.500"/></g><rect x="387" y="627.500" width="33.500" height="1.500" fill="#b3a8f2"/><path d="M444.2 613.7L436.41 609.20A9 9 0 0 1 451.99 609.20z" fill="#e33b2e"/><path d="M444.2 613.7L451.99 609.20A9 9 0 0 1 444.20 622.70z" fill="#f7c12e"/><path d="M444.2 613.7L444.20 622.70A9 9 0 0 1 436.41 609.20z" fill="#2aa24a"/><circle cx="444.2" cy="613.7" r="4.140000000000001" fill="#fff"/><circle cx="444.2" cy="613.7" r="3.2399999999999998" fill="#3f86f0"/><circle cx="485" cy="614.0" r="9.3" fill="#f4672a"/><path d="M482.21 603.27q8.370000000000001 0.9300000000000002 11.625 10.230000000000002l-8.370000000000001 2.79z" fill="#fbb52c"/><circle cx="484.535" cy="614.43" r="5.115000000000001" fill="#7a3bd1"/><path d="M476.165 611.64q4.65 -6.51 11.16 -2.79q-2.79 7.440000000000001 -11.16 2.79z" fill="#f7882c"/><rect x="468.500" y="627.500" width="33.500" height="1.500" fill="#b3a8f2"/><g transform="translate(516,606) scale(1)"><rect x="6" y="1" width="12.500" height="13.500" rx="1" fill="#e9eef7"/><path d="M11 4h6M11 6.500h6M11 9h6M11 11.500h6" stroke="#2b5cb0" stroke-width="1"/><rect x="0" y="0" width="10.500" height="15.500" rx="1" fill="#1f55a8"/><path d="M2 4.500l1.500 6.500 1.750-5 1.750 5 1.500-6.500" stroke="#fff" stroke-width="1.300" fill="none"/></g><path d="M558 608l9-4 9 3.500-1.500 12.500-8.500 1.500-8.500-4z" fill="#c9c7c2" stroke="#8c8a85" stroke-width=".6"/><path d="M562 609l8 2-1.500 7-6-1.500z" fill="#efeee9"/><path d="M567 604.500l1.500 15" stroke="#77756f" stroke-width=".8"/><rect x="568" y="609.500" width="6" height="7" fill="#a9b7c4" stroke="#66717c" stroke-width=".5"/><rect x="599" y="604.800" width="17.500" height="17" fill="#ffcb12"/><path d="M616.500 613.500v8.300h-8.500z" fill="#3a3418"/><circle cx="648" cy="613.600" r="9.500" fill="#10a0ea"/><text x="648" y="618.500" font-size="14" font-weight="bold" fill="#fff" text-anchor="middle">S</text><rect x="632" y="627.500" width="33.500" height="1.500" fill="#b3a8f2"/><path d="M683 610a8 8 0 1 1 12 8" fill="none" stroke="#e0662a" stroke-width="3"/><path d="M690 603.500l-2 14M691 603.500l1.500 14" stroke="#dfe6ee" stroke-width="1.300"/><circle cx="686.500" cy="619.500" r="2.300" fill="none" stroke="#2b8fe0" stroke-width="1.400"/><circle cx="693" cy="620" r="2.300" fill="none" stroke="#2b8fe0" stroke-width="1.400"/><g transform="translate(719,603.5) scale(1)"><circle cx="12" cy="3.800" r="3" fill="#5b62c9"/><circle cx="17.300" cy="5" r="2.200" fill="#5b62c9"/><path d="M7 7.500h9.500v6.500q0 3.500-4.500 3.500t-5-3.500z" fill="#5b62c9"/><path d="M15 8h5.500v5q0 2.500-3 2.500h-2.500z" fill="#4a51b5"/><rect x="0" y="4.500" width="10.500" height="10.500" rx="1.200" fill="#4850bb"/><path d="M2.800 7.500h5M5.300 7.500v5.500" stroke="#fff" stroke-width="1.400"/></g><circle cx="736" cy="620" r="4.600" fill="#d9314a" stroke="#f2dfe2" stroke-width=".8"/><path d="M733.500 620h5" stroke="#fff" stroke-width="1.400"/><rect x="713.500" y="627.500" width="33.500" height="1.500" fill="#b3a8f2"/><rect x="761.500" y="604" width="18" height="18" rx="1" fill="#e8eef8"/><rect x="761.500" y="604" width="18" height="9" fill="#5c93d6"/><path d="M762 611q5-6 9-1t8-3v6h-17z" fill="#cfe0f5"/><rect x="769" y="613.500" width="10.500" height="6" fill="#d9433b"/><text x="774.200" y="618.500" font-size="4.500" font-weight="bold" fill="#fff" text-anchor="middle">PDF</text><rect x="751" y="627.500" width="40" height="1.500" fill="#b3a8f2"/><g font-size="9.300" fill="#fff" text-anchor="end"><text x="1093.500" y="609.800" textLength="35" lengthAdjust="spacingAndGlyphs">8:31 AM</text><text x="1098.500" y="624.600" textLength="44.500" lengthAdjust="spacingAndGlyphs">4/12/2021</text></g><!--IT-END-->

</svg>
</div>
<div id="strip">
<svg width="0" height="0" style="position:absolute"><defs>
<filter id="avblur" x="-10%" y="-10%" width="120%" height="120%"><feGaussianBlur stdDeviation="0.7"/></filter><clipPath id="avc"><circle cx="22" cy="22" r="22"/></clipPath>
<radialGradient id="av2g" cx=".45" cy=".5" r=".6"><stop offset="0" stop-color="#ffffff"/><stop offset=".55" stop-color="#dcd8f3"/><stop offset="1" stop-color="#9a90d6"/></radialGradient>
<linearGradient id="av3g" x1="0" y1="0" x2="0" y2="1"><stop offset="0" stop-color="#cfe0f2"/><stop offset=".5" stop-color="#b9c4cf"/><stop offset="1" stop-color="#6b6259"/></linearGradient>
</defs></svg>
  <div class="tile" style="left:0;width:180px;background:#373737"><svg class="av" style="left:68px" width="44" height="44" viewBox="0 0 44 44"><g clip-path="url(#avc)"><g filter="url(#avblur)"><rect width="44" height="44" fill="#dfe2e2"/><path d="M6 44q3-8 10-9l12 0q8 2 10 9z" fill="#24242a"/><ellipse cx="21.500" cy="23" rx="10" ry="13.500" fill="#d9b8a6" transform="rotate(-8 21.500 23)"/><path d="M9 17q-1-11 9-13q9-1 12 6q-7-2-12 1q-5 3-5 10l-1 6q-3-3-3-10z" fill="#2b2726"/><path d="M13 20.500q4-2 7.500 0M23.500 19.500q3.500-2 7 0" stroke="#8f7fb0" stroke-width="2.200" fill="none" opacity=".85"/><path d="M19 31q3 1.600 6.500-.500" stroke="#b06a62" stroke-width="1.500" fill="none"/><path d="M22 23l1.500 4.500" stroke="#bf9684" stroke-width="1.200"/></g></g></svg><div class="nm"><span class="fit" id="f6" style="transform:scaleX(0.960)">Veronica Vasquez</span></div><svg class="abs" style="left:115px;top:74px" width="16" height="16" viewBox="0 0 16 16" fill="none" stroke="#e8e8e8" stroke-width="1.100"><rect x="5.800" y="1.800" width="4.400" height="7.600" rx="2.200" fill="#e8e8e8" stroke="none"/><path d="M3.800 7.500q0 4 4.200 4t4.200-4M8 11.500v2.500"/><path d="M2.500 1.500l11 13" stroke="#333" stroke-width="2.600"/><path d="M2.800 1.800l10.400 12.400"/></svg></div>
  <div class="tile" style="left:180px;width:180px"><svg class="av" style="left:68px" width="44" height="44" viewBox="0 0 44 44"><g clip-path="url(#avc)"><g filter="url(#avblur)"><rect width="44" height="44" fill="url(#av2g)"/><path d="M30 0q6 4 8 14l6 4v-18zM36 26q4 6 2 18h6v-20z" fill="#3f3b8e" opacity=".8"/><path d="M0 20q6 6 6 14t4 10h-10z" fill="#8d86cf" opacity=".7"/><path d="M10 8q10-10 22 0q-2 8-6 12q-5-3-10 0q-5-5-6-12z" fill="#f6f5fc"/><path d="M20 4q5 4 4 14" stroke="#a9a2dc" stroke-width="2" fill="none"/><ellipse cx="24" cy="25" rx="5.500" ry="7" fill="#e8c6c2"/><path d="M20 22l8 0" stroke="#7a6aa8" stroke-width="1.200"/><path d="M14 30q10 8 20 0l2 14h-24z" fill="#cfc4e6"/><path d="M18 38q6-4 12 0l1 6h-14z" fill="#c98f8a"/><path d="M8 14q6 8 4 18M36 14q-6 8-3 18" stroke="#fff" stroke-width="2.500" fill="none" opacity=".85"/></g></g></svg><div class="nm"><span class="fit" id="f7" style="transform:scaleX(0.978)">Terrell Culler</span></div><svg class="abs" style="left:90px;top:74px" width="16" height="16" viewBox="0 0 16 16" fill="none" stroke="#e8e8e8" stroke-width="1.100"><rect x="5.800" y="1.800" width="4.400" height="7.600" rx="2.200" fill="#e8e8e8" stroke="none"/><path d="M3.800 7.500q0 4 4.200 4t4.200-4M8 11.500v2.500"/><path d="M2.500 1.500l11 13" stroke="#333" stroke-width="2.600"/><path d="M2.800 1.800l10.400 12.400"/></svg></div>
  <div class="tile" style="left:360px;width:180px"><svg class="av" style="left:68px" width="44" height="44" viewBox="0 0 44 44"><g clip-path="url(#avc)"><g filter="url(#avblur)"><rect width="44" height="44" fill="url(#av3g)"/><path d="M0 12q2-9 10-8q8 2 7 14q0 10-3 18l-14 4z" fill="#33251f"/><ellipse cx="9.500" cy="19.500" rx="6" ry="8.500" fill="#e0b7a2" transform="rotate(6 9.500 19.500)"/><path d="M5 23q4 3 8-.500" stroke="#f4ece8" stroke-width="1.300" fill="none"/><path d="M0 31q8-5 15 2l3 11h-18z" fill="#222a38"/><path d="M26 7q5-6 12 0l1 4h-13z" fill="#24262c"/><ellipse cx="32.500" cy="13.500" rx="5" ry="5.500" fill="#d3a58a"/><path d="M28 15.500q4.500 6 9 0l-.500 4.500h-8z" fill="#4d382c"/><path d="M21 22q8-9 18 0q4 8 0 15l-9 7h-10q-3-12 1-22z" fill="#3b2c26"/><path d="M29 21q1.500 6 .500 10" stroke="#d9d2cb" stroke-width="2" fill="none"/><path d="M26 29q4-2.500 8 0l1 6q-5 3.500-10 0z" fill="#b9a9a0"/><ellipse cx="30.500" cy="32.500" rx="2.600" ry="1.900" fill="#1e1817"/><path d="M23 38q7 4 13-1l-2 7h-9z" fill="#c43a2e"/><path d="M16 36q5 2 6 8h-7z" fill="#e4dfd8"/></g></g></svg><div class="nm"><span class="fit" id="f8" style="transform:scaleX(0.987)">Brittany Herr</span></div></div>
  <div class="tile" style="left:540px;width:181px;background:#434241"><svg class="av" style="left:68px" width="44" height="44" viewBox="0 0 44 44"><g clip-path="url(#avc)"><g filter="url(#avblur)"><rect width="44" height="44" fill="#d2d0cd"/><path d="M0 4q9 3 10 16t4 24h-14z" fill="#c7342c"/><path d="M9 16q8-5 18-2l15 5v18l-16 7q-12-2-15-10q-3-9-2-18z" fill="#c79a86"/><path d="M8 15q5-3 10-1q-5 5-4 12q1 8 10 12l8 1q-4 5-12 4q-8-4-10-12q-2-8-2-16z" fill="#2c2321"/><path d="M23 17q9-3 16 3l1 10q-6 6-14 3q-4-8-3-16z" fill="#c4c6cc" opacity=".9"/><path d="M26 20l9 10M35 19l-8 11M24 25h14" stroke="#a3a8b2" stroke-width="1.200"/><path d="M18 40q12 2 26-6v10h-26z" fill="#aeaaa6"/><path d="M30 0h14v16q-6-3-14-4z" fill="#d6d6d6"/><path d="M38 14h6v6h-5z" fill="#7e9db4"/></g></g></svg></div>
</div>
<div class="abs" style="left:0;top:727px;width:1366px;height:1px;background:#131313"></div>
<div id="wtask"><svg class="abs" style="left:0;top:0" width="1366" height="40" viewBox="0 728 1366 40" font-family="'Liberation Sans',sans-serif"><rect x="0" y="728" width="1366" height="40" fill="#393939"/><rect x="0" y="728" width="48.500" height="40" fill="#3e302d"/><path d="M15.5 742.324L23.182000000000002 741.245V747.7154999999999H15.5zM24.351000000000003 740.996L32.2 740V747.7154999999999H24.351000000000003zM15.5 748.8845H23.182000000000002V755.355L15.5 754.276zM24.351000000000003 748.8845H32.2V756.6L24.351000000000003 755.604z" fill="#fff"/><rect x="48.500" y="728" width="343" height="40" fill="#f3f3f3"/><rect x="48.500" y="728" width="343" height="1" fill="#d8d8d8"/><circle cx="71.200" cy="745.800" r="4.900" fill="none" stroke="#222" stroke-width="1.300"/><path d="M67.700 749.400l-7 6.800" stroke="#222" stroke-width="1.400"/><text x="88.400" y="753.700" font-size="15" fill="#333" textLength="127" lengthAdjust="spacingAndGlyphs">Type here to search</text><circle cx="415.800" cy="748.400" r="6.700" fill="none" stroke="#fff" stroke-width="2"/><g transform="translate(456,737.5) scale(1.19)"><path d="M0 2.500q0-1.500 1.500-1.500h5l2 2h8.500q1.500 0 1.500 1.500v9h-18.500z" fill="#f2b83a"/><path d="M0 5.500h18.500v8q0 1.500-1.500 1.500h-15.500q-1.500 0-1.500-1.500z" fill="#fbd66b"/><path d="M4 9h10.500v6h-10.500z" fill="#3c8fe0"/><path d="M6.500 11.500h5.500v3.500h-5.500z" fill="#f5c84a"/></g><rect x="506.500" y="736.200" width="18.800" height="23.300" rx="1.500" fill="#8d939b"/><rect x="508.500" y="738.200" width="14.800" height="5.300" fill="#6ad0f2"/><rect x="508.5" y="745.5" width="4.100" height="3.500" fill="#e8eaee"/><rect x="513.6" y="745.5" width="4.100" height="3.500" fill="#e8eaee"/><rect x="518.7" y="745.5" width="4.100" height="3.500" fill="#2f5fa8"/><rect x="508.5" y="750.0" width="4.100" height="3.500" fill="#e8eaee"/><rect x="513.6" y="750.0" width="4.100" height="3.500" fill="#e8eaee"/><rect x="518.7" y="750.0" width="4.100" height="3.500" fill="#2f5fa8"/><rect x="508.5" y="754.5" width="4.100" height="3.500" fill="#e8eaee"/><rect x="513.6" y="754.5" width="4.100" height="3.500" fill="#e8eaee"/><rect x="518.7" y="754.5" width="4.100" height="3.500" fill="#2f5fa8"/><path d="M552.500 743.500q0-1.500 1.500-1.500h4l1.500-3h9l1.500 3h6q1.500 0 1.500 1.500v12.500q0 1.500-1.500 1.500h-22q-1.500 0-1.500-1.500z" fill="#8f959c"/><circle cx="565" cy="749.800" r="6.200" fill="#e6e8ec"/><circle cx="565" cy="749.800" r="4.700" fill="#8f86f0"/><circle cx="574" cy="744.800" r="1" fill="#e8e8e8"/><rect x="602.300" y="737" width="23.400" height="22" rx="1.500" fill="#2c8ae8"/><path d="M602.300 755l8-9.500 6.500 7.500 3.500-3.500 5.400 5.500v2.500q0 1.500-1.500 1.500h-20.400q-1.500 0-1.500-1.500z" fill="#12489c"/><path d="M602.300 753l8-7.500 9 13.500h-15.500q-1.500 0-1.500-1.500z" fill="#1b5fc0"/><circle cx="620" cy="742.500" r="2.200" fill="#fff"/><rect x="639" y="728" width="44.700" height="40" fill="#545454"/><rect x="639" y="766" width="44.700" height="2" fill="#b3a8f2"/><g transform="translate(650,736.5) scale(1.22)"><circle cx="12" cy="3.800" r="3" fill="#5b62c9"/><circle cx="17.300" cy="5" r="2.200" fill="#5b62c9"/><path d="M7 7.500h9.500v6.500q0 3.500-4.500 3.500t-5-3.500z" fill="#5b62c9"/><path d="M15 8h5.500v5q0 2.500-3 2.500h-2.500z" fill="#4a51b5"/><rect x="0" y="4.500" width="10.500" height="10.500" rx="1.200" fill="#4850bb"/><path d="M2.800 7.500h5M5.300 7.500v5.500" stroke="#fff" stroke-width="1.400"/></g><circle cx="671" cy="755.800" r="5.200" fill="#c4122f" stroke="#f3e4e6" stroke-width=".8"/><rect x="684.500" y="728" width="1" height="40" fill="#2c2c2c"/><path d="M712.1 748.4L702.57 742.90A11 11 0 0 1 721.63 742.90z" fill="#e33b2e"/><path d="M712.1 748.4L721.63 742.90A11 11 0 0 1 712.10 759.40z" fill="#f7c12e"/><path d="M712.1 748.4L712.10 759.40A11 11 0 0 1 702.57 742.90z" fill="#2aa24a"/><circle cx="712.1" cy="748.4" r="5.0600000000000005" fill="#fff"/><circle cx="712.1" cy="748.4" r="3.96" fill="#3f86f0"/><rect x="691.500" y="766" width="40.500" height="2" fill="#b3a8f2"/><path d="M1103.200 751l5.700-5.700 5.700 5.700" fill="none" stroke="#fff" stroke-width="1.300"/><rect x="1126.200" y="745" width="12.800" height="7.600" rx="1" fill="none" stroke="#fff" stroke-width="1.100"/><rect x="1139.600" y="747.300" width="1.400" height="3" fill="#fff"/><rect x="1127.800" y="746.600" width="6.500" height="4.400" fill="#fff"/><rect x="1153.600" y="739.800" width="5.800" height="11" rx="2.900" fill="#fff"/><path d="M1151.200 748q0 6 5.300 6t5.300-6M1156.500 754v3M1153.500 757.300h6" fill="none" stroke="#fff" stroke-width="1.100"/><g fill="none" stroke="#b9b9b9" stroke-width="1.200"><path d="M1177 755.500a11.500 11.500 0 0 1 11.500-11.500"/><path d="M1180.500 755.500a8 8 0 0 1 8-8"/><path d="M1184 755.500a4.500 4.500 0 0 1 4.500-4.500"/></g><circle cx="1187.300" cy="754.300" r="1.500" fill="#fff"/><path d="M1197.500 746h2.800l3.700-3.500v11.500l-3.700-3.500h-2.800z" fill="none" stroke="#fff" stroke-width="1.100" stroke-linejoin="round"/><path d="M1206 745.500q2 2.700 0 5.500M1208.300 743.500q3.400 4.700 0 9.500M1210.600 741.800q4.600 6.400 0 12.900" fill="none" stroke="#fff" stroke-width="1.100"/><rect x="1221.300" y="741.400" width="22.500" height="12.200" rx="1" fill="none" stroke="#fff" stroke-width="1.100"/><path d="M1224 744.500h17.500M1224 747.500h17.500" stroke="#fff" stroke-width="1.200" stroke-dasharray="1.500 1.400"/><path d="M1226.500 750.800h12" stroke="#fff" stroke-width="1.200"/><g font-size="12" fill="#fff"><text x="1259.300" y="742.600" textLength="43" lengthAdjust="spacingAndGlyphs">7:31 AM</text><text x="1255.300" y="761" textLength="50.500" lengthAdjust="spacingAndGlyphs">4/12/2021</text></g><path d="M1324.700 740.200h16.300v11.500h-9.800l-3.500 3v-3h-3z" fill="#fff"/><path d="M1327.500 743.300h10.500M1327.500 746h10.500M1327.500 748.700h7" stroke="#393939" stroke-width="1"/><circle cx="1340.500" cy="755.200" r="7.600" fill="#393939" stroke="#cfcfcf" stroke-width="1"/><text x="1340.500" y="759.300" font-size="11" font-weight="bold" fill="#fff" text-anchor="middle">4</text><rect x="1360" y="728" width="1" height="40" fill="#6a6a6a"/></svg></div>
</body>
</html>
